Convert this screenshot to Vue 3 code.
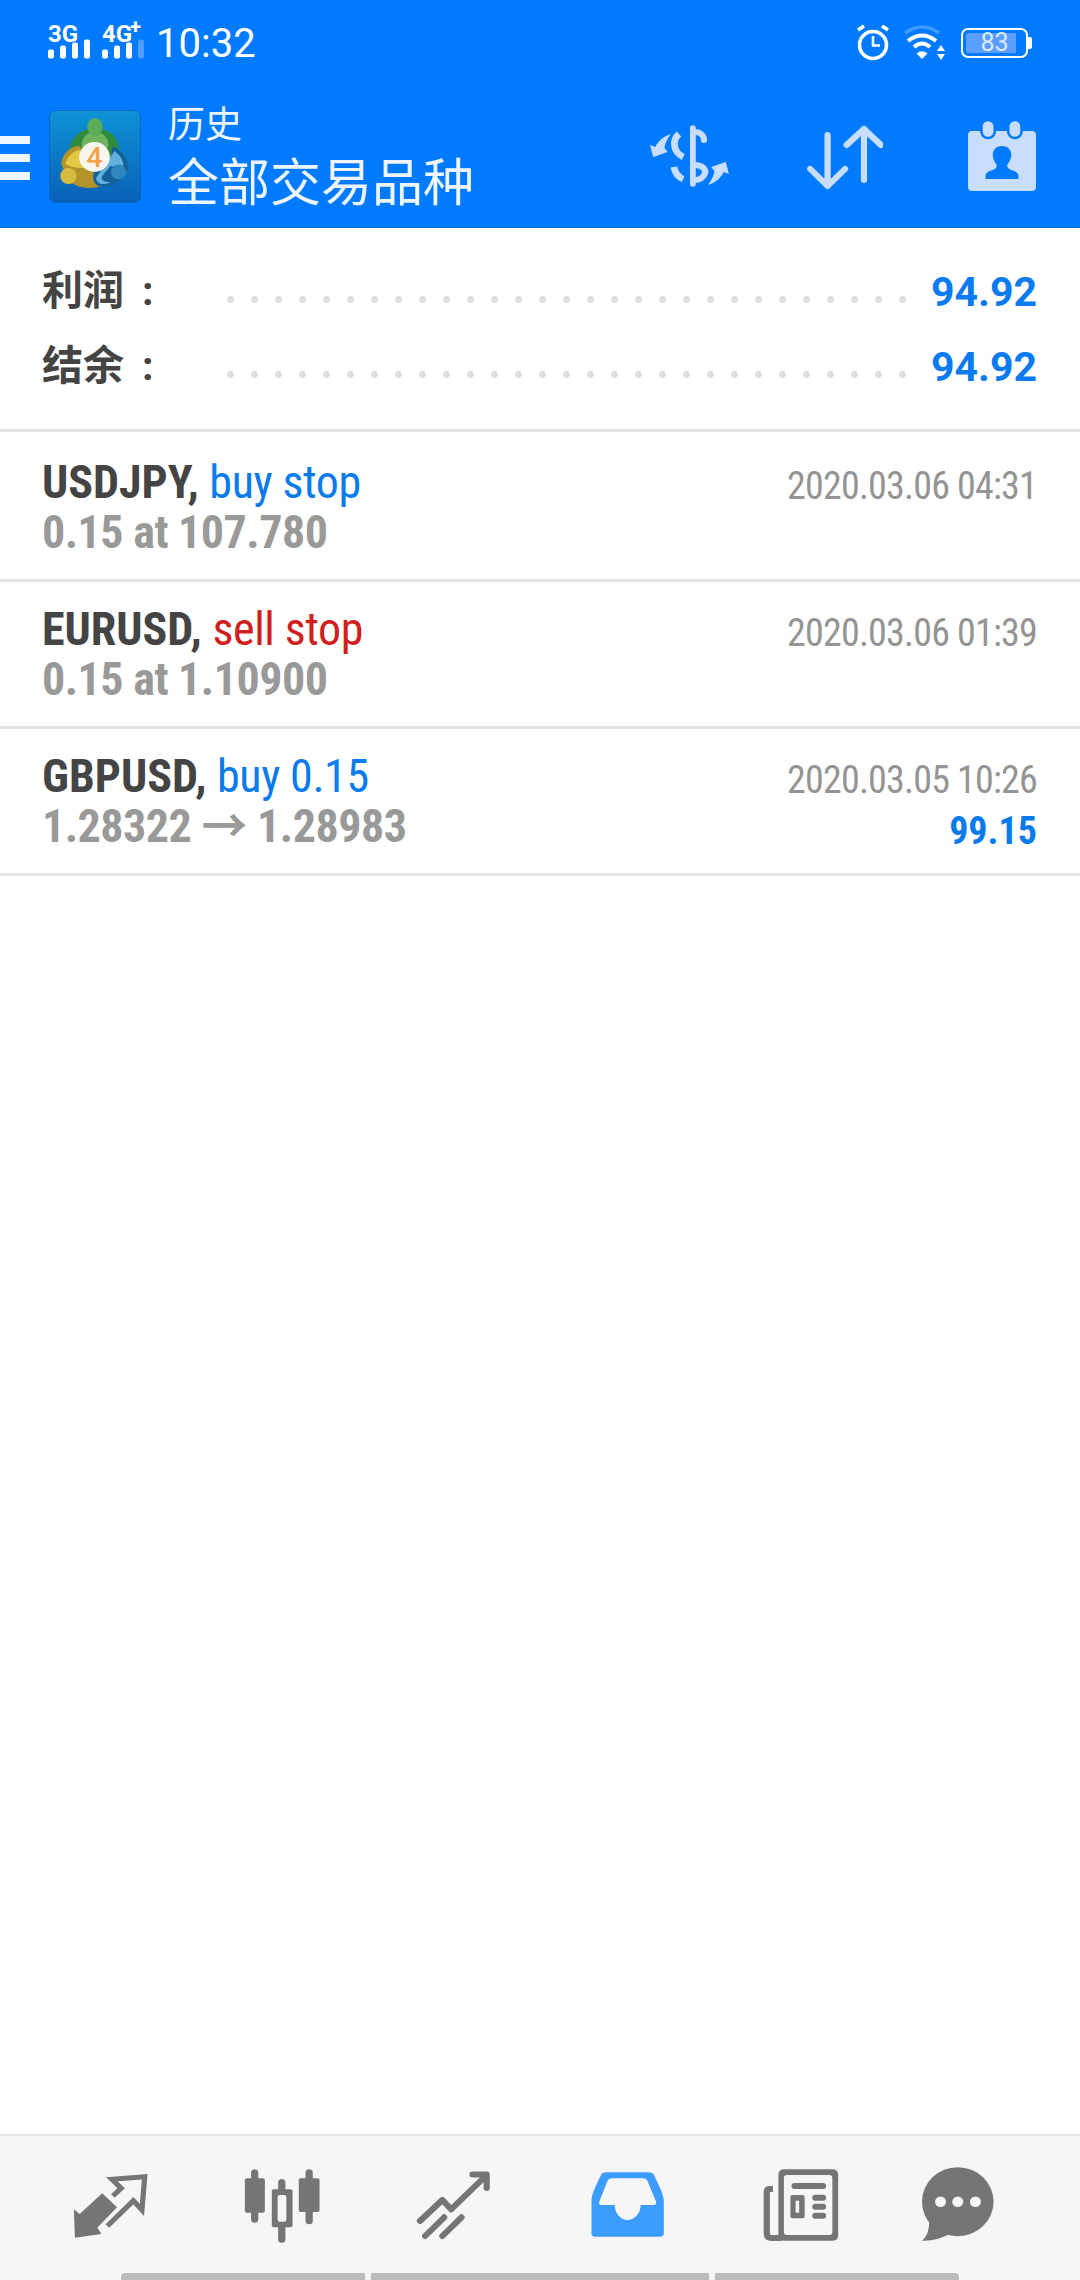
<template>
  <div class="page">
    <header class="top">
      <div class="status">
        <svg class="signal" width="100" height="70" viewBox="0 -16 100 70">
          <text x="0" y="17.5" class="net">3G</text>
          <text x="54" y="17.5" class="net">4G</text>
          <text x="82" y="10" class="net plus">+</text>
          <rect v-for="b in signalBars" :key="b.x" :x="b.x" :y="34.5 - b.h" width="6" :height="b.h" rx="2" :fill="b.c" />
        </svg>
        <span class="clock">10:32</span>
        <div class="status-right">
          <svg width="36" height="38" viewBox="0 0 36 38" fill="none" stroke="#fff">
            <circle cx="18" cy="21" r="13.5" stroke-width="3.6" />
            <path d="M18 12v9.5h7" stroke-width="2.6" />
            <path d="M3 6l6-4M33 6l-6-4" stroke-width="3.6" />
          </svg>
          <svg class="wifi" width="46" height="38" viewBox="0 0 46 38" fill="none">
            <path d="M3 9Q20-3 37 9" stroke="#fff" stroke-opacity=".25" stroke-width="3.4" />
            <path d="M6 17Q20 6 34 17" stroke="#fff" stroke-width="4" />
            <path d="M12 23Q20 16 28 23" stroke="#fff" stroke-width="4" />
            <path d="M14.5 29.5Q20 25 25.5 29.5L20 35Z" fill="#fff" />
            <path d="M39 21l4 6h-8zM39 36l4-6h-8z" fill="#fff" />
          </svg>
          <div class="battery">
            <div class="battery-body">
              <div class="battery-fill"></div>
              <span class="battery-num">83</span>
            </div>
            <div class="battery-nub"></div>
          </div>
        </div>
      </div>

      <div class="toolbar">
        <div class="burger"><i></i><i></i><i></i></div>
        <svg class="logo" width="92" height="93" viewBox="0 0 90 93" preserveAspectRatio="none">
          <defs>
            <linearGradient id="logoBg" x1="0" y1="0" x2="0" y2="1">
              <stop offset="0" stop-color="#0e93d6" />
              <stop offset="1" stop-color="#0a60b8" />
            </linearGradient>
          </defs>
          <rect x="0.5" y="0.5" width="89" height="92" rx="6" fill="url(#logoBg)" stroke="#0a66c4" />
          <path d="M20 44C20 30 28 22 35 20C39 19 51 19 55 20C63 23 70 32 68 45L44 50Z" fill="#2f8a3c" />
          <path d="M32 37C31 28 37 22 45 22C53 22 59 28 58 37L45 42Z" fill="#6db45c" />
          <ellipse cx="45" cy="17" rx="7.5" ry="9" fill="#5cab57" />
          <path d="M12 54C13 43 21 36 30 36L42 58C44 66 48 72 52 76C40 80 26 78 19 70Z" fill="#b2942a" />
          <path d="M16 54C18 46 24 41 30 40L37 58C30 58 22 58 16 54Z" fill="#e3c844" />
          <circle cx="19" cy="66" r="8" fill="#d6bc3e" />
          <path d="M62 36C73 41 78 50 77 60C73 72 58 78 48 76C42 72 42 64 46 60L60 54Z" fill="#14619a" />
          <path d="M64 41C71 46 74 53 72 58L60 56L52 66C50 70 54 72 60 72C54 76 46 74 46 68Z" fill="#62b0dc" />
          <circle cx="68" cy="62" r="7.5" fill="#2f86bd" />
          <circle cx="44.5" cy="47" r="15" fill="#f7f5ee" />
          <text x="44.5" y="57" class="logo-four">4</text>
        </svg>
        <div class="titles">
          <div class="title-sm">历史</div>
          <div class="title-lg">全部交易品种</div>
        </div>
        <div class="actions">
          <svg class="act-money" width="83" height="64" viewBox="0 0 80 64" preserveAspectRatio="none" fill="none" stroke="#c9deff" stroke-linecap="round">
            <path d="M42.3 4V60" stroke-width="5.6" />
            <path d="M44 8C50 8 53 12 53 16" stroke-width="6" />
            <path d="M29 10C22 16 23 28 33 33" stroke-width="6.5" stroke-linecap="butt" />
            <path d="M44 41C52 41 55 46 54 49C53 53 49 56 44 56" stroke-width="6" stroke-linecap="butt" />
            <path d="M24 43C25 49 28 53 33 55" stroke-width="6.5" stroke-linecap="butt" />
            <path d="M21 10C17 16 15 21 15 24L18 28L4 33L1 21L6 23C9 17 14 12 21 10Z" fill="#c9deff" stroke="none" />
            <path d="M21 10C17 16 15 21 15 24L18 28L4 33L1 21L6 23C9 17 14 12 21 10Z" fill="#c9deff" stroke="none" transform="rotate(180 39 35.5)" />
          </svg>
          <svg class="act-sort" width="79" height="68" viewBox="0 0 76 68" preserveAspectRatio="none" fill="none" stroke="#c9deff" stroke-width="6" stroke-linecap="round" stroke-linejoin="round">
            <path d="M22.7 13V64M6 47L22.7 64L39.5 47" />
            <path d="M57.7 7V58M41 23L57.7 7L74 23" />
          </svg>
          <svg class="act-cal" width="70" height="72" viewBox="0 0 68 72" preserveAspectRatio="none">
            <rect x="1" y="11" width="66" height="60" rx="4" fill="#c9deff" />
            <rect x="14" y="0" width="13" height="18" rx="6.5" fill="#c9deff" stroke="#007aff" stroke-width="2.5" />
            <rect x="40" y="0" width="13" height="18" rx="6.5" fill="#c9deff" stroke="#007aff" stroke-width="2.5" />
            <path d="M34 26C28 26 25 30 25 35C25 39 27 42 29 45C29 47 28 49 25 50C21 51 18 53 18 56V59H50V56C50 53 47 51 43 50C40 49 39 47 39 45C41 42 43 39 43 35C43 30 40 26 34 26Z" fill="#007aff" />
          </svg>
        </div>
      </div>
    </header>

    <section class="summary">
      <div v-for="s in summary" :key="s.label" class="sum-row">
        <span class="sum-label">{{ s.label }}<span class="sum-colon">:</span></span>
        <span class="sum-dots"></span>
        <span class="sum-value">{{ s.value }}</span>
      </div>
    </section>

    <main class="list">
      <div v-for="o in orders" :key="o.symbol" class="order">
        <div class="order-left">
          <div class="order-head"><b>{{ o.symbol }},</b> <span :class="o.side">{{ o.action }}</span></div>
          <div class="order-price">{{ o.price }}</div>
        </div>
        <div class="order-right">
          <div class="order-date">{{ o.date }}</div>
          <div v-if="o.profit" class="order-profit">{{ o.profit }}</div>
        </div>
      </div>
    </main>

    <footer class="tabs">
      <div class="tab-icons">
        <svg width="83" height="80" viewBox="0 0 80 80" preserveAspectRatio="none" fill="none">
          <path d="M32 28.3L46.3 42.3L27.3 62.7L31.3 69L5.7 72.7L4.7 44.3L10.3 49Z" fill="#757575" />
          <path d="M42.3 31L50.3 23.3L41.3 14.3L73 11.7L70.3 45L62 35.7L37 61" stroke="#757575" stroke-width="5" />
        </svg>
        <svg width="83" height="80" viewBox="0 0 80 80" preserveAspectRatio="none" fill="#757575">
          <rect x="9.7" y="4.3" width="7" height="53.4" rx="3.5" />
          <rect x="3.7" y="13.3" width="19.3" height="34.4" rx="2" />
          <rect x="35.8" y="14" width="7" height="63.7" rx="3.5" />
          <rect x="29.7" y="24.3" width="20" height="38" rx="2" />
          <rect x="35.3" y="30" width="8.4" height="26.7" rx="2" fill="#f6f6f6" />
          <rect x="62.2" y="4.3" width="7" height="55" rx="3.5" />
          <rect x="55.7" y="13.3" width="20" height="33.7" rx="2" />
        </svg>
        <svg width="83" height="80" viewBox="0 0 80 80" preserveAspectRatio="none" fill="none" stroke="#757575" stroke-width="6" stroke-linecap="round" stroke-linejoin="round">
          <path d="M7.7 56L29.3 35L37.7 44.3L71 11" />
          <path d="M58.3 9.5H72V23" />
          <path d="M12.7 71L31 52.3M29.3 71L47.7 52.3" />
        </svg>
        <svg width="83" height="80" viewBox="0 0 80 80" preserveAspectRatio="none">
          <path d="M5.3 69V35C6 27 10 20 14 11C15 8 17 7.3 20 7.3H60C63 7.3 65 8 66 11C70 20 74 27 75 35V69C75 71 73 71.7 71 71.7H9C7 71.7 5.3 71 5.3 69Z" fill="#3d9dff" />
          <path d="M25 13.3H55C57 13.3 58.5 14 59.5 16.5L67.7 37C68 39 67 40 65 40H52.7C52.7 48 47 55 40 55C33 55 27.7 48 27.7 40H15C13 40 12.3 39 12.7 37L20.5 16.5C21.5 14 23 13.3 25 13.3Z" fill="#f6f6f6" />
        </svg>
        <svg width="83" height="80" viewBox="0 0 80 80" preserveAspectRatio="none">
          <path d="M13.5 24H10Q7.5 24 7.5 27V68Q7.5 73 12 73H22" fill="none" stroke="#757575" stroke-width="6" />
          <rect x="18.7" y="4.3" width="57.6" height="71.4" rx="5" fill="#757575" />
          <rect x="24" y="10" width="46.7" height="60" rx="3" fill="#f6f6f6" />
          <rect x="31.3" y="18" width="33.4" height="6" rx="3" fill="#757575" />
          <rect x="30.3" y="30" width="13.7" height="23.3" rx="2" fill="#757575" />
          <rect x="35.3" y="35.7" width="3.4" height="12" fill="#f6f6f6" />
          <rect x="51.3" y="29.7" width="13.4" height="6" rx="3" fill="#757575" />
          <rect x="51.3" y="38.7" width="13.4" height="6" rx="3" fill="#757575" />
          <rect x="51.3" y="47.7" width="13.4" height="6" rx="3" fill="#757575" />
        </svg>
        <svg width="83" height="80" viewBox="0 0 80 80" preserveAspectRatio="none">
          <circle cx="39.3" cy="36.7" r="34.5" fill="#757575" />
          <path d="M11.7 55C12 64 10 71 5 75.7C15 76 25 73 33 68Z" fill="#757575" />
          <circle cx="22.7" cy="36.7" r="5.3" fill="#f6f6f6" />
          <circle cx="39.3" cy="36.7" r="5.3" fill="#f6f6f6" />
          <circle cx="56.3" cy="36.7" r="5.3" fill="#f6f6f6" />
        </svg>
      </div>
      <div class="tab-bars"><i></i><i></i><i></i></div>
    </footer>
  </div>
</template>

<script setup>
const signalBars = [
  { x: 0, h: 9, c: '#fff' },
  { x: 12, h: 13, c: '#fff' },
  { x: 24, h: 16, c: '#fff' },
  { x: 36, h: 19, c: '#fff' },
  { x: 54, h: 9, c: '#fff' },
  { x: 66, h: 13, c: '#fff' },
  { x: 78, h: 16, c: '#fff' },
  { x: 90, h: 19, c: '#4f9dff' }
]

const summary = [
  { label: '利润', value: '94.92' },
  { label: '结余', value: '94.92' }
]

const orders = [
  { symbol: 'USDJPY', action: 'buy stop', side: 'buy', price: '0.15 at 107.780', date: '2020.03.06 04:31' },
  { symbol: 'EURUSD', action: 'sell stop', side: 'sell', price: '0.15 at 1.10900', date: '2020.03.06 01:39' },
  { symbol: 'GBPUSD', action: 'buy 0.15', side: 'buy', price: '1.28322 → 1.28983', date: '2020.03.05 10:26', profit: '99.15' }
]
</script>

<style>
html, body { margin: 0; background: #fff; }
</style>

<style scoped>
.page {
  width: 1080px;
  height: 2280px;
  display: flex;
  flex-direction: column;
  background: #fff;
  font-family: Roboto, "Noto Sans CJK SC", sans-serif;
  overflow: hidden;
}

.top { background: #007aff; height: 228px; box-sizing: border-box; border-bottom: 1px solid #0a6fd8; flex-shrink: 0; }

.status { height: 85px; display: flex; align-items: center; padding: 0 48px 0 48px; color: #fff; }
.net { font: bold 24px Roboto, sans-serif; fill: #fff; }
.plus { font-size: 20px; }
.clock { font-size: 40px; margin-left: 8px; line-height: 1; margin-top: 3px; }
.status-right { margin-left: auto; display: flex; align-items: center; }
.wifi { margin-left: 11px; }

.battery { display: flex; align-items: center; margin-left: 13px; }
.battery-body {
  position: relative;
  width: 67px; height: 30px; box-sizing: border-box;
  border: 2px solid #fff; border-radius: 7px;
  padding: 3px;
}
.battery-fill { width: 50px; height: 100%; background: #5a9fff; border-radius: 3px 0 0 3px; }
.battery-num {
  position: absolute; inset: 0;
  display: flex; align-items: center; justify-content: center;
  font-size: 25px; color: #dce9ff; line-height: 1;
}
.battery-nub { width: 4px; height: 12px; background: #fff; border-radius: 0 2px 2px 0; }

.toolbar { height: 142px; display: flex; align-items: center; }
.burger { width: 30px; display: flex; flex-direction: column; gap: 10px; margin-top: 4px; }
.burger i { display: block; height: 8px; background: #f0f6ff; }
.logo { margin-left: 19px; }
.titles { margin-left: 27px; margin-top: 5px; color: #eef5ff; }
.title-sm { font-size: 37px; line-height: 46px; }
.title-lg { font-size: 51px; line-height: 62px; margin-top: 4px; }

.actions { margin-left: auto; display: flex; align-items: center; padding-right: 43px; }
.act-money { margin-right: 72px; }
.act-sort { margin-right: 84px; }

.summary { height: 204px; box-sizing: border-box; padding: 26px 43px 0 42px; border-bottom: 3px solid #e3e3e3; flex-shrink: 0; }
.sum-row { height: 75px; display: flex; align-items: center; }
.sum-label { width: 185px; font-size: 41px; font-weight: 700; color: #444; line-height: 1; flex-shrink: 0; }
.sum-colon { margin-left: 18px; }
.sum-dots {
  width: 680px; height: 7px; margin-top: 16px;
  background: radial-gradient(circle at 3.5px 3.5px, #dedede 3.2px, transparent 3.8px) 0 0 / 24px 7px repeat-x;
}
.sum-value { margin-left: auto; font-size: 41px; font-weight: 700; color: #0a7bf0; }

.list { flex: 1; }
.order {
  height: 147px; box-sizing: border-box;
  display: flex; justify-content: space-between;
  padding: 22px 43px 0 42px;
  border-bottom: 3px solid #e3e3e3;
}
.order:first-child { height: 150px; padding-top: 25px; }
.order-head { font-size: 46px; line-height: 50px; color: #444; font-stretch: 75%; white-space: nowrap; }
.order-head b { font-weight: 700; }
.buy { color: #0a7bea; letter-spacing: -0.4px; }
.sell { color: #d01f20; letter-spacing: -0.4px; }
.order-price { font-size: 46px; line-height: 50px; font-weight: 700; color: #999; font-stretch: 75%; white-space: nowrap; letter-spacing: -0.5px; }
.order-right { text-align: right; }
.order-date { font-size: 38px; line-height: 58px; color: #949494; font-stretch: 75%; white-space: nowrap; letter-spacing: -0.8px; }
.order-profit { font-size: 38px; line-height: 44px; font-weight: 700; color: #0a7bea; font-stretch: 75%; }

.tabs { height: 146px; box-sizing: border-box; background: #f6f6f6; border-top: 2px solid #e5e5e5; display: flex; flex-direction: column; flex-shrink: 0; }
.tab-icons {
  display: grid;
  grid-template-columns: 172px 171px 174px 173px 158px 83px;
  padding: 29px 0 0 69px;
  flex: 1;
}
.tab-bars { display: flex; gap: 6px; padding-left: 121px; height: 7px; }
.tab-bars i { display: block; height: 7px; background: #bbb; }
.tab-bars i:nth-child(1) { width: 244px; border-radius: 4px 0 0 0; }
.tab-bars i:nth-child(2) { width: 338px; }
.tab-bars i:nth-child(3) { width: 244px; border-radius: 0 4px 0 0; }

.logo-four { font: 500 28px Roboto, sans-serif; fill: #f3a24a; text-anchor: middle; }
</style>
